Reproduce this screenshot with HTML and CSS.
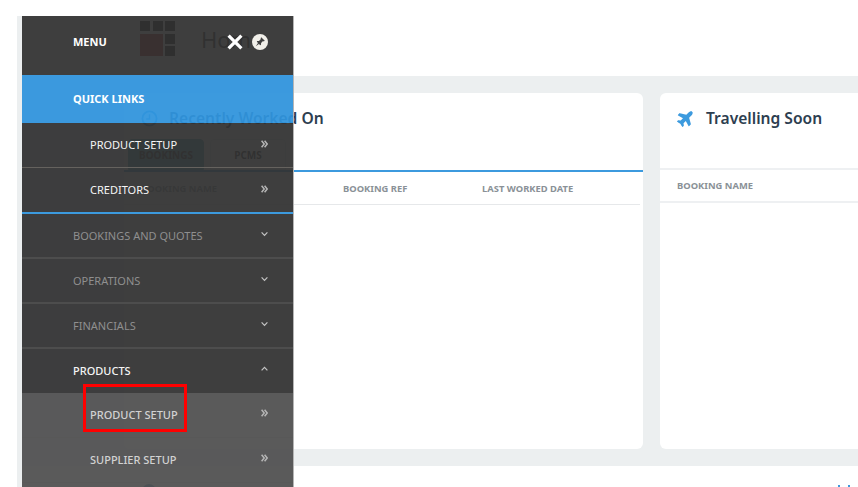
FILE: index.html
```html
<!DOCTYPE html>
<html lang="en">
<head>
  <meta charset="UTF-8" />
  <meta name="viewport" content="width=device-width, initial-scale=1.0" />
  <title>Home</title>
  <link rel="stylesheet" href="styles.css">
</head>
<body>
  <svg class="sprites" width="0" height="0">
    <symbol id="chev-double" viewBox="0 0 7 8"><path d="M.6.8 3.2 4 .6 7.2M3.6.8 6.2 4 3.6 7.2" fill="none" stroke="currentColor" stroke-width="1.5"/></symbol>
    <symbol id="chev-down" viewBox="0 0 7 8"><path d="M.6 2.4 3.5 5.4 6.4 2.4" fill="none" stroke="currentColor" stroke-width="1.2"/></symbol>
    <symbol id="chev-up" viewBox="0 0 7 8"><path d="M.6 5.4 3.5 2.4 6.4 5.4" fill="none" stroke="currentColor" stroke-width="1.2"/></symbol>
  </svg>

  <div class="page">
    <header class="topbar">
      <div class="logo">
        <span class="logo-cell"></span><span class="logo-cell"></span><span class="logo-cell"></span>
        <span class="logo-photo"></span><span class="logo-cell"></span>
        <span class="logo-cell"></span>
      </div>
      <h1>Home</h1>
    </header>

    <main class="board">
      <section class="card card-left">
        <div class="card-head">
          <svg class="card-icon" viewBox="0 0 18 18"><circle cx="9" cy="9" r="7.5" fill="none" stroke="#3c9ade" stroke-width="2"/><path d="M9 4.5V9.5H5.5" fill="none" stroke="#3c9ade" stroke-width="1.6"/></svg>
          <h2>Recently Worked On</h2>
        </div>
        <div class="tabs">
          <span class="tab tab-on">BOOKINGS</span>
          <span class="tab">PCMS</span>
        </div>
        <div class="table-head">
          <span class="col col-name">BOOKING NAME</span>
          <span class="col col-ref">BOOKING REF</span>
          <span class="col">LAST WORKED DATE</span>
        </div>
      </section>

      <section class="card card-right">
        <div class="card-head">
          <svg class="card-icon plane" viewBox="0 0 576 512"><path fill="#3c9ade" d="M480 192H365.71L260.61 8.06A16.014 16.014 0 0 0 246.71 0h-65.5c-10.63 0-18.3 10.17-15.38 20.39L214.86 192H112l-43.2-57.6c-3.02-4.03-7.77-6.4-12.8-6.4H16.01C5.6 128-2.04 137.78.49 147.88L32 256 .49 364.12C-2.04 374.22 5.6 384 16.01 384H56c5.04 0 9.78-2.37 12.8-6.4L112 320h102.86l-49.03 171.6c-2.92 10.22 4.75 20.4 15.38 20.4h65.5c5.74 0 11.04-3.08 13.89-8.06L365.71 320H480c35.35 0 96-28.65 96-64s-60.65-64-96-64z"/></svg>
          <h2>Travelling Soon</h2>
        </div>
        <div class="table-head table-head-plain">
          <span class="col">BOOKING NAME</span>
        </div>
      </section>
    </main>

    <footer class="foot">
      <span class="foot-icon"></span>
      <span class="foot-marks"><i></i><i></i></span>
    </footer>
  </div>

  <!-- Slide-out menu, sits over the page -->
  <nav class="menu">
    <div class="menu-head">
      <span class="menu-title">MENU</span>
      <div class="menu-tools">
        <svg class="tool" viewBox="0 0 16 16"><path d="M1.6 1.6 14.4 14.4M14.4 1.6 1.6 14.4" stroke="#fff" stroke-width="3.2" fill="none"/></svg>
        <svg class="tool" viewBox="0 0 16 16"><circle cx="8" cy="8" r="8" fill="#f1efe9"/><path d="M9.2 3.2 12.8 6.8 11.7 7.4 11 7.1 9.1 9 9 10.8 8.2 11.2 4.8 7.8 5.2 7 7 6.9 8.9 5 8.6 4.3ZM6 9 6.9 9.9 3.8 12.2Z" fill="#404040"/></svg>
      </div>
    </div>

    <div class="row row-quick"><span>QUICK LINKS</span></div>
    <div class="row row-sub"><span>PRODUCT SETUP</span><svg class="chev"><use href="#chev-double"/></svg></div>
    <div class="row row-sub row-last"><span>CREDITORS</span><svg class="chev"><use href="#chev-double"/></svg></div>

    <div class="row row-top"><span>BOOKINGS AND QUOTES</span><svg class="chev"><use href="#chev-down"/></svg></div>
    <div class="row row-top"><span>OPERATIONS</span><svg class="chev"><use href="#chev-down"/></svg></div>
    <div class="row row-top"><span>FINANCIALS</span><svg class="chev"><use href="#chev-down"/></svg></div>
    <div class="row row-top row-open"><span>PRODUCTS</span><svg class="chev"><use href="#chev-up"/></svg></div>

    <div class="row row-child"><span class="marked">PRODUCT SETUP</span><svg class="chev"><use href="#chev-double"/></svg></div>
    <div class="row row-child"><span>SUPPLIER SETUP</span><svg class="chev"><use href="#chev-double"/></svg></div>
    <div class="row row-child"></div>
  </nav>
</body>
</html>
```

FILE: styles.css
```css
html, body {
  margin: 0;
  padding: 0;
  height: 487px;
  overflow: hidden;
  background: #fff;
  font-family: 'Noto Sans', 'Open Sans', sans-serif;
}
.sprites {
  position: absolute;
}

/* Page underneath the menu */
.page {
  height: 471px;
  margin: 16px 0 0 17px;
  overflow: hidden;
}
.topbar {
  height: 60px;
  display: flex;
  align-items: center;
  padding: 0 0 15px 123px;
  box-sizing: border-box;
}
.logo {
  width: 35px;
  height: 35px;
  display: grid;
  grid-template-columns: repeat(3, 10px);
  grid-template-rows: repeat(3, 10px);
  gap: 2.5px;
}
.logo-cell {
  background: #000;
}
.logo-photo {
  grid-column: 1 / span 2;
  grid-row: 2 / span 2;
  background: #a3121c;
}
.logo-cell:nth-child(5) {
  grid-column: 3;
  grid-row: 2;
}
.logo-cell:nth-child(6) {
  grid-column: 3;
  grid-row: 3;
}
h1 {
  margin: 0 0 0 26px;
  font-size: 22px;
  font-weight: 400;
  color: #222;
}
.board {
  height: 390px;
  background: #eceff0;
  box-sizing: border-box;
  padding: 17px 0 17px 107px;
  display: flex;
  gap: 17px;
}
.card {
  flex: 0 0 519px;
  background: #fff;
  border-radius: 6px;
  overflow: hidden;
}
.card-head {
  height: 50px;
  padding: 15px 0 0 17px;
  box-sizing: border-box;
  display: flex;
  align-items: flex-start;
  gap: 11px;
}
.card-icon {
  width: 17px;
  height: 17px;
  margin-top: 2px;
}
.plane {
  width: 18px;
  height: 18px;
  margin-top: 1px;
  transform: rotate(-45deg);
}
h2 {
  margin: 0;
  font-size: 15.6px;
  line-height: 21px;
  font-weight: 600;
  color: #2d3e50;
}
.tabs {
  height: 31px;
  padding: 0 0 0 4px;
  display: flex;
  gap: 6px;
  border-bottom: 2px solid #3c9ade;
  margin-top: -4px;
}
.tab {
  width: 76px;
  height: 31px;
  border: 1px solid #dfe3e5;
  border-radius: 4px 4px 0 0;
  box-sizing: border-box;
  font-size: 10px;
  font-weight: 700;
  line-height: 30px;
  text-align: center;
  color: #222;
}
.tab-on {
  background: #4fa3b8;
  border-color: #4fa3b8;
}
.table-head {
  height: 33px;
  margin-right: 3px;
  padding-left: 17px;
  display: flex;
  align-items: center;
  border-bottom: 1px solid #e6e8ea;
  box-sizing: border-box;
}
.table-head-plain {
  margin-top: 25px;
  margin-right: 0;
  height: 35px;
  border-top: 2px solid #eef0f2;
  border-bottom: 2px solid #eef0f2;
}
.col {
  font-size: 9.4px;
  font-weight: 700;
  color: #8a9197;
  white-space: nowrap;
}
.col-name {
  width: 202px;
}
.col-ref {
  width: 139px;
}
.foot {
  height: 21px;
  position: relative;
}
.foot-icon {
  position: absolute;
  left: 125px;
  top: 18px;
  width: 14px;
  height: 14px;
  border-radius: 50%;
  background: #2d6fa0;
}
.foot-marks {
  position: absolute;
  right: 8px;
  bottom: 0;
  display: flex;
  gap: 8px;
}
.foot-marks i {
  display: block;
  width: 2px;
  height: 2px;
  background: #3c9ade;
}

/* Slide-out menu */
.menu {
  position: absolute;
  left: 17px;
  top: 16px;
  width: 271px;
  height: 471px;
  border-left: 5px solid #eceff0;
  border-right: 1px solid #b5b5b5;
  overflow: hidden;
  color: #fff;
}
.menu-head {
  height: 59px;
  padding: 0 25px 8px 51px;
  box-sizing: border-box;
  display: flex;
  align-items: center;
  justify-content: space-between;
  background: rgba(50, 50, 50, 0.94);
}
.menu-title {
  font-size: 11px;
  font-weight: 700;
}
.menu-tools {
  display: flex;
  gap: 9px;
}
.tool {
  width: 16px;
  height: 16px;
}
.row {
  height: 45px;
  padding: 0 25px 0 51px;
  box-sizing: border-box;
  display: flex;
  align-items: center;
  justify-content: space-between;
  font-size: 11px;
  background: rgba(50, 50, 50, 0.94);
  border-bottom: 1px solid #5a5a5a;
}
.row-quick {
  height: 48px;
  padding-bottom: 2px;
  font-weight: 700;
  background: rgba(48, 148, 220, 0.94);
  border-bottom: 0;
}
.row-sub {
  padding-left: 68px;
  padding-bottom: 1px;
  color: #f5f5f5;
  border-bottom-color: #65625e;
}
.row-last {
  height: 46px;
  border-bottom: 2px solid #3c9ade;
}
.row-top {
  color: #8f8f8f;
  border-bottom: 2px solid #4d4d4d;
}
.row-open {
  height: 44px;
  padding-bottom: 2px;
  color: #f5f5f5;
  font-weight: 500;
  border-bottom: 0;
}
.row-child {
  padding-left: 68px;
  padding-bottom: 2px;
  color: #d2d2d2;
  font-weight: 500;
  background: rgba(80, 80, 80, 0.94);
  border-bottom: 1px solid #585858;
}
.marked {
  position: relative;
}
.marked::after {
  content: "";
  position: absolute;
  left: -7px;
  top: -23px;
  width: 104px;
  height: 48px;
  border: 3px solid #f00;
  box-sizing: border-box;
}
.chev {
  width: 7px;
  height: 8px;
  margin-top: -3px;
  color: #c4c4c4;
}
.row-sub .chev,
.row-child .chev {
  margin-top: -2px;
  color: #b5b5b5;
}
```
